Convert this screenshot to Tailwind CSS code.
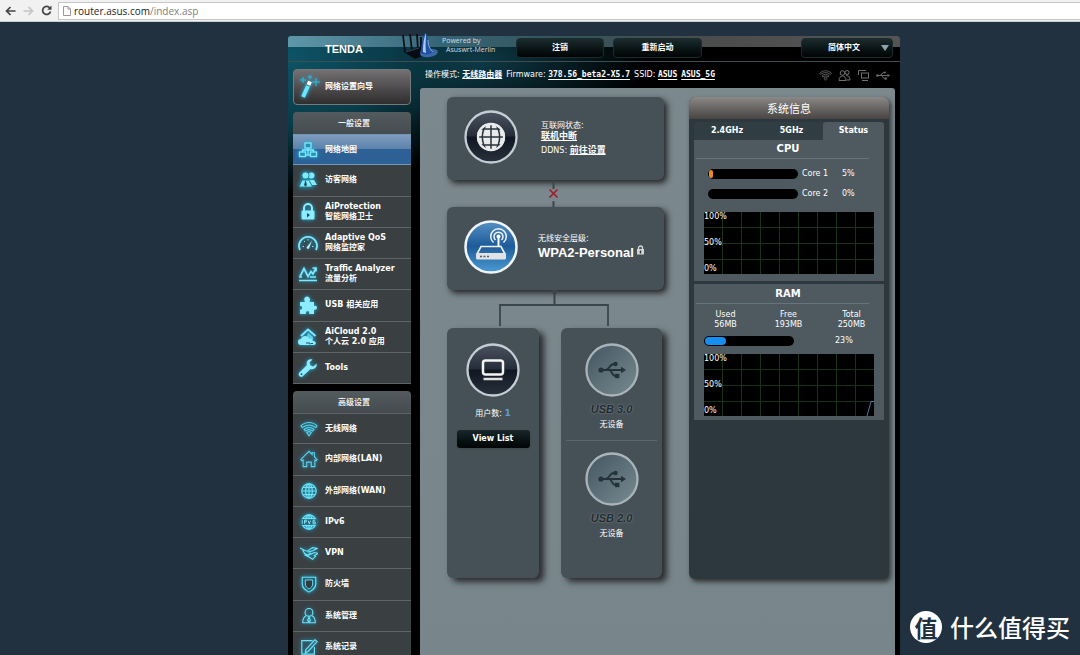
<!DOCTYPE html>
<html lang="zh-CN">
<head>
<meta charset="utf-8">
<title>ASUS Router - 网络地图</title>
<script src="https://cdn.jsdelivr.net/npm/@tailwindcss/browser@4"></script>
</head>
<body class="flex h-screen flex-col overflow-hidden bg-[#21313f] font-['DejaVu_Sans','Noto_Sans_CJK_SC',sans-serif] text-[8px] leading-[10px] text-white">

<!-- Icons -->
<svg class="hidden" aria-hidden="true">
  <symbol id="map" viewBox="0 0 20 20"><g fill="#2b8fb0" stroke="#7fe9ff" stroke-width="1.3"><rect x="7" y="3" width="6" height="5"/><rect x="1.5" y="12" width="6" height="4.500"/><rect x="12.500" y="12" width="6" height="4.500"/><path d="M10 8v6M4.500 12V10h11v2M8 15h4" fill="none"/></g></symbol>
  <symbol id="guests" viewBox="0 0 20 20"><g fill="#7fe9ff"><circle cx="13.500" cy="5.500" r="3"/><path d="M11 10h5l3 5h-5z"/><circle cx="7.500" cy="5.500" r="3.600" stroke="#1b6f86" stroke-width=".8"/><path d="M1 17l3-7h7l3.500 7z" stroke="#1b6f86" stroke-width=".8"/><path d="M7.500 10l-1.500 5 1.500 1.500L9 15z" fill="#17505f"/></g></symbol>
  <symbol id="lock" viewBox="0 0 20 20"><path d="M6 9V6a4 4 0 0 1 8 0v3" fill="none" stroke="#8decff" stroke-width="2"/><rect x="3.500" y="8.500" width="13" height="9" rx="1" fill="#8decff"/><path d="M9 11l3 2-3 2.500z" fill="#175060"/></symbol>
  <symbol id="gauge" viewBox="0 0 20 20"><g fill="none" stroke="#7fe9ff"><path d="M2 17a9 9 0 1 1 16 0" stroke-width="1.800"/><path d="M4.500 13.500h1.500M6 8l1 1M10 6v1.500M15.500 13.500H14" stroke-width="1"/></g><path d="M8.500 14.500l5.500-7-3 8a1.500 1.500 0 0 1-2.500-1z" fill="#a8f3ff"/></symbol>
  <symbol id="traffic" viewBox="0 0 20 20"><g fill="none" stroke="#7fe9ff" stroke-width="1.700"><path d="M2 12.500l4-8 4 8 3-5 2 2.500L18 4"/><path d="M14.500 4H18v3.500"/><path d="M1 16.500h18M1 13h3m8 0h6" stroke-width="1.300"/></g></symbol>
  <symbol id="usbapp" viewBox="0 0 20 20"><path d="M2 7h5c-2-4 .5-5.500 2-5.500S13 3 11.500 7H16v4c4-1.500 4 5 0 3.500V19h-5c1.500-4-4-4-3 0H2v-4.500c3 1 3-4.500 0-3.500z" fill="#8decff"/></symbol>
  <symbol id="cloud" viewBox="0 0 20 20"><path d="M3 9l7-6.500L17.500 9" fill="none" stroke="#7fe9ff" stroke-width="2"/><path d="M10 5.500l5 4.500v3H8z" fill="#5ccbe4"/><path d="M3 18a3 3 0 0 1 0-6c1-4 7-4 8-.5 3-.5 4 1 3.500 2.500 4-.5 4.500 4 1 4z" fill="#8decff"/><path d="M8 16h4v1.500M13 16.500h2" stroke="#175060" fill="none"/></symbol>
  <symbol id="wrench" viewBox="0 0 20 20"><path d="M18.500 5.500l-3 3-3-1-1-3 3-3c-4-1.500-7 2-5.500 5.500L1.500 14.500a2.300 2.300 0 0 0 3.500 3.500L12.500 11c4 1.300 7-2 6-5.500z" fill="#8decff"/><circle cx="3.500" cy="16.200" r=".9" fill="#175060"/></symbol>
  <symbol id="wifi" viewBox="0 0 20 20"><g fill="none" stroke="currentColor" stroke-width="1.200"><path d="M1 6.500c5-5 13-5 18 0l-1.500 2c-4.500-4-10.500-4-15 0z"/><path d="M4.500 10.500c3-3 8-3 11 0L14 12.300c-2.500-2-5.500-2-8 0z"/><path d="M7.500 14c1.500-1.300 3.500-1.300 5 0L10 17.500z"/></g></symbol>
  <symbol id="home" viewBox="0 0 20 20"><path d="M1 10.500l9-9 3.500 3.500V3H16v4.500l3 3-1 1.500-1.500-1v7.500h-4v-5h-5v5h-4V11L2 12z" fill="none" stroke="#5ed4ee" stroke-width="1.200"/></symbol>
  <symbol id="globe" viewBox="0 0 20 20"><g fill="none" stroke="#6fe2f8" stroke-width="1.300"><circle cx="10" cy="10" r="8"/><ellipse cx="10" cy="10" rx="3.700" ry="8"/><path d="M10 2v16M2 10h16M3.500 6h13M3.500 14h13"/></g></symbol>
  <symbol id="ipv6" viewBox="0 0 20 20"><use href="#globe"/><rect x="1" y="7" width="18" height="6" fill="#246476"/><path d="M2.500 8v4M5 12V8h2v2H5M9 8.500l1.300 3.500 1.300-3.500M17 8h-2.500v4H17v-2h-2.500" stroke="#8decff" fill="none"/></symbol>
  <symbol id="vpn" viewBox="0 0 20 20"><path d="M0 4.500l5 2.500 3 1 6-4 5 1-5 2.500-5 1.500M3 6.500l2 4 4 2 7-3 4 1-4 2.500 1 1-3 3-5-3-4-2M9 12.500l3-2.500" fill="none" stroke="#6fe2f8" stroke-width="1.300"/></symbol>
  <symbol id="shield" viewBox="0 0 20 20"><path d="M2.500 2.500h15V10c0 4.500-3.500 6.500-7.500 9-4-2.500-7.500-4.500-7.500-9z" fill="#246476" stroke="#6fe2f8" stroke-width="1.200"/><path d="M6 5.500h8V10c0 3-1.800 4-4 5.500C7.800 14 6 13 6 10z" fill="#303a40" stroke="#6fe2f8"/></symbol>
  <symbol id="admin" viewBox="0 0 20 20"><g fill="none" stroke="#6fe2f8" stroke-width="1.300"><circle cx="10" cy="6" r="4.300"/><path d="M7 9.500c-3 1.500-4 4.500-4 8h14c0-3.500-1-6.500-4-8M10 11l-1.500 4 1.500 1.500 1.500-1.500z"/></g></symbol>
  <symbol id="log" viewBox="0 0 20 20"><path d="M14 3H2v15h14v-8M19 4L9 15l-3 1.500.5-3.500L16.500 2z" fill="none" stroke="#6fe2f8" stroke-width="1.300"/></symbol>
  <symbol id="usb" viewBox="0 0 28 18"><g fill="none" stroke="currentColor" stroke-width="1.900"><path d="M3 9h21M7 9c5 0 4-6 9-6h1M11 9c3 0 3 6 6 6h2"/></g><g fill="currentColor"><circle cx="3" cy="9" r="2.600"/><circle cx="17.500" cy="3" r="2.200"/><rect x="17" y="12.800" width="4.400" height="4.400"/><path d="M23 5.800l5 3.200-5 3.200z"/></g></symbol>
</svg>

<!-- Browser toolbar -->
<nav aria-label="浏览器" class="flex h-[22px] shrink-0 items-center border-b border-[#c9ccd0] bg-[#f1f1f1] text-[#555]">
  <button aria-label="后退" class="ml-[5px] w-[14px]"><svg class="h-[10px] w-[11px]" viewBox="0 0 11 10"><path d="M10.500 5H2M5.500 1L1.500 5l4 4" fill="none" stroke="#444" stroke-width="1.700"/></svg></button>
  <button aria-label="前进" class="ml-1 w-[14px]"><svg class="h-[10px] w-[11px]" viewBox="0 0 11 10"><path d="M.5 5H9M5.500 1l4 4-4 4" fill="none" stroke="#c4c4c4" stroke-width="1.700"/></svg></button>
  <button aria-label="刷新" class="ml-[4px] w-[14px]"><svg class="h-[11px] w-[11px]" viewBox="0 0 11 11"><path d="M8.800 3A4 4 0 1 0 9.500 6.500" fill="none" stroke="#444" stroke-width="1.700"/><path d="M10.500.5v4.300H6.200z" fill="#444"/></svg></button>
  <div class="ml-[3px] flex h-[18px] flex-1 items-center border border-r-0 border-[#c6c6c6] bg-white pl-1">
    <svg class="h-[10px] w-[8px]" viewBox="0 0 8 10"><path d="M.5.500h4.500l2.500 2.500v6.500h-7zM5 .5V3h2.500" fill="none" stroke="#999"/></svg>
    <a href="#" class="ml-[3px] font-['Open_Sans',sans-serif] text-[10px] leading-4 text-[#808080]"><span class="text-[#222]">router.asus.com</span>/index.asp</a>
  </div>
</nav>

<div class="mt-[14px] mr-[180px] ml-[288px] flex min-h-0 flex-1 flex-col rounded-t-[3px] bg-black bg-[radial-gradient(ellipse_210px_140px_at_0_20px,#0d5467_0%,#0a3b48_50%,transparent_100%),radial-gradient(ellipse_170px_70px_at_190px_25px,#0d3a46_0%,transparent_100%)]">

  <!-- Top bar -->
  <header class="flex h-[26px] items-start rounded-t-[3px] border-b border-[#3d4d52] bg-[linear-gradient(90deg,#5f97aa_0%,#356575_25%,#34535c_45%,#4c4c4c_70%,#555_100%)] bg-[length:100%_11px] bg-no-repeat">
    <h1 class="ml-[37px] w-[76px] pt-[7px] font-['Liberation_Sans',sans-serif] text-[11px] leading-3 font-bold">TENDA</h1>
    <svg class="-mt-1 h-[28px] w-[38px] shrink-0" viewBox="0 0 38 28"><path d="M2 3l2 17M9 2l2 17M16 2l1 17M20 5v15" stroke="#0b1016" stroke-width="1.800"/><path d="M3 20l16-5 8 7-13 5z" fill="#080c12"/><path d="M5 20l13-4" stroke="#39566d" stroke-width=".8"/><ellipse cx="28" cy="21" rx="9" ry="4" fill="#3b69a8" transform="rotate(-8 28 21)"/><path d="M19 21C22 12 20 4 25 1c1 3 2 3 2 6 1 5 2 10 6 13-4 3-9 3-14 1z" fill="#2450a0"/><path d="M25 1c-2 5-3 10-3 19l3 1C24 14 25 8 25 1z" fill="#a7cdf3"/><path d="M27 8c0 5 2 10 5 12" stroke="#80acdf" fill="none"/></svg>
    <p class="ml-[3px] w-[74px] shrink-0 font-['Open_Sans',sans-serif] text-[7px] leading-[9px] text-[#d5dde0]">Powered by<br><span class="pl-1">Asuswrt-Merlin</span></p>
    <button class="mt-[2px] h-5 w-[88px] shrink-0 rounded-[4px] border border-[#1b2c2e] bg-linear-to-b from-[#1c2b2d] to-[#020505] font-bold">注销</button>
    <button class="mt-[2px] ml-[9px] h-5 w-[89px] shrink-0 rounded-[4px] border border-[#1b2c2e] bg-linear-to-b from-[#1c2b2d] to-[#020505] font-bold">重新启动</button>
    <div class="relative mt-[2px] mr-[7px] ml-auto">
      <select aria-label="语言" class="h-5 w-[92px] appearance-none rounded-[4px] border border-[#1b2c2e] bg-linear-to-b from-[#1c2b2d] to-[#020505] pl-[26px] font-bold"><option>简体中文</option></select>
      <svg class="pointer-events-none absolute top-[7px] right-1 h-[6px] w-[8px]" viewBox="0 0 8 6"><path d="M0 0h8L4 6z" fill="#8ba5ab"/></svg>
    </div>
  </header>

  <div class="flex min-h-0 flex-1 pr-[5px] pl-[5px]">

    <!-- Sidebar -->
    <aside class="w-[118px] shrink-0 pt-[7px] font-bold">
      <a href="#" class="flex h-[36px] items-center rounded-[4px] border border-[#74797b] bg-linear-to-b from-[#737172] to-[#302d2f] pl-[5px]">
        <svg class="mr-[4px] h-[24px] w-[22px] drop-shadow-[0_0_2px_#22c5f0]" viewBox="0 0 22 24"><path d="M4 22l5-11" stroke="#6fe6ff" stroke-width="4"/><path d="M9.500 10l1.500-3.500" stroke="#fff" stroke-width="4"/><path d="M4 2v6M1 5h6M17 3v8M13 7h8M11 0v4M9 2h4" stroke="#31b9df" stroke-width="1"/></svg>网络设置向导</a>

      <h2 class="mt-[7px] flex h-[22px] items-center justify-center rounded-t-[4px] bg-linear-to-b from-[#535b5e] to-[#454c4f] pt-[2px] pl-[4px] font-medium">一般设置</h2>
      <ul class="grid h-[250px] auto-rows-fr bg-[#3a3f42]">
        <li class="flex border-y border-[#7595b6] bg-[linear-gradient(#7e9cbd_0%,#5b82ac_48%,#2e6195_50%,#2c6197_100%)]"><a href="#" class="flex flex-1 items-center pl-[5px]"><svg class="mr-[7px] size-5 drop-shadow-[0_0_2px_#19b5e0]"><use href="#map"/></svg>网络地图</a></li>
        <li class="flex border-b border-[#5d6467]"><a href="#" class="flex flex-1 items-center pl-[5px]"><svg class="mr-[7px] size-5 drop-shadow-[0_0_2px_#19b5e0]"><use href="#guests"/></svg>访客网络</a></li>
        <li class="flex border-b border-[#5d6467]"><a href="#" class="flex flex-1 items-center pl-[5px]"><svg class="mr-[7px] size-5 drop-shadow-[0_0_2px_#19b5e0]"><use href="#lock"/></svg><span>AiProtection<br>智能网络卫士</span></a></li>
        <li class="flex border-b border-[#5d6467]"><a href="#" class="flex flex-1 items-center pl-[5px]"><svg class="mr-[7px] size-5 drop-shadow-[0_0_2px_#19b5e0]"><use href="#gauge"/></svg><span>Adaptive QoS<br>网络监控家</span></a></li>
        <li class="flex border-b border-[#5d6467]"><a href="#" class="flex flex-1 items-center pl-[5px]"><svg class="mr-[7px] size-5 shrink-0 drop-shadow-[0_0_2px_#19b5e0]"><use href="#traffic"/></svg><span class="whitespace-nowrap">Traffic Analyzer<br>流量分析</span></a></li>
        <li class="flex border-b border-[#5d6467]"><a href="#" class="flex flex-1 items-center pl-[5px]"><svg class="mr-[7px] size-5 drop-shadow-[0_0_2px_#19b5e0]"><use href="#usbapp"/></svg>USB 相关应用</a></li>
        <li class="flex border-b border-[#5d6467]"><a href="#" class="flex flex-1 items-center pl-[5px]"><svg class="mr-[7px] size-5 drop-shadow-[0_0_2px_#19b5e0]"><use href="#cloud"/></svg><span>AiCloud 2.0<br>个人云 2.0 应用</span></a></li>
        <li class="flex border-b border-[#5d6467]"><a href="#" class="flex flex-1 items-center pl-[5px]"><svg class="mr-[7px] size-5 drop-shadow-[0_0_2px_#19b5e0]"><use href="#wrench"/></svg>Tools</a></li>
      </ul>

      <h2 class="mt-[7px] flex h-[22px] items-center justify-center rounded-t-[4px] bg-linear-to-b from-[#535b5e] to-[#454c4f] pt-[2px] pl-[4px] font-medium">高级设置</h2>
      <ul class="grid h-[250px] auto-rows-fr bg-[#3a3f42]">
        <li class="flex border-y border-[#5d6467]"><a href="#" class="flex flex-1 items-center pl-[7px]"><svg class="mr-[7px] size-[18px] text-[#5ed4ee] drop-shadow-[0_0_2px_#19b5e0]"><use href="#wifi"/></svg>无线网络</a></li>
        <li class="flex border-b border-[#5d6467]"><a href="#" class="flex flex-1 items-center pl-[7px]"><svg class="mr-[7px] size-[18px] drop-shadow-[0_0_2px_#19b5e0]"><use href="#home"/></svg>内部网络(LAN)</a></li>
        <li class="flex border-b border-[#5d6467]"><a href="#" class="flex flex-1 items-center pl-[7px]"><svg class="mr-[7px] size-[18px] drop-shadow-[0_0_2px_#19b5e0]"><use href="#globe"/></svg>外部网络(WAN)</a></li>
        <li class="flex border-b border-[#5d6467]"><a href="#" class="flex flex-1 items-center pl-[7px]"><svg class="mr-[7px] size-[18px] drop-shadow-[0_0_2px_#19b5e0]"><use href="#ipv6"/></svg>IPv6</a></li>
        <li class="flex border-b border-[#5d6467]"><a href="#" class="flex flex-1 items-center pl-[7px]"><svg class="mr-[7px] size-[18px] drop-shadow-[0_0_2px_#19b5e0]"><use href="#vpn"/></svg>VPN</a></li>
        <li class="flex border-b border-[#5d6467]"><a href="#" class="flex flex-1 items-center pl-[7px]"><svg class="mr-[7px] size-[18px] drop-shadow-[0_0_2px_#19b5e0]"><use href="#shield"/></svg>防火墙</a></li>
        <li class="flex border-b border-[#5d6467]"><a href="#" class="flex flex-1 items-center pl-[7px]"><svg class="mr-[7px] size-[18px] drop-shadow-[0_0_2px_#19b5e0]"><use href="#admin"/></svg>系统管理</a></li>
        <li class="flex border-b border-[#5d6467]"><a href="#" class="flex flex-1 items-center pl-[7px]"><svg class="mr-[7px] size-[18px] drop-shadow-[0_0_2px_#19b5e0]"><use href="#log"/></svg>系统记录</a></li>
      </ul>
    </aside>

    <div class="ml-[9px] flex flex-1 flex-col">
      <!-- Status line -->
      <div class="flex h-[26px] items-center pr-[5px] pl-[5px] whitespace-nowrap">
        <p>操作模式: <a href="#" class="font-bold underline">无线路由器</a></p>
        <p class="ml-[4px]">Firmware: <a href="#" class="font-['DejaVu_Sans_Mono',monospace] font-bold underline underline-offset-2">378.56_beta2-X5.7</a></p>
        <p class="ml-[4px]">SSID: <a href="#" class="font-['DejaVu_Sans_Mono',monospace] font-bold underline underline-offset-2">ASUS</a></p>
        <a href="#" class="ml-[4px] font-['DejaVu_Sans_Mono',monospace] font-bold underline underline-offset-2">ASUS_5G</a>
        <div class="ml-auto flex items-center gap-[6px] text-[#707070]">
          <svg class="size-[13px]"><use href="#wifi"/></svg>
          <svg class="size-[13px]" viewBox="0 0 13 13" fill="none" stroke="currentColor"><circle cx="4.500" cy="4" r="2.300"/><circle cx="9" cy="3.500" r="2"/><path d="M1 11.500c0-6 7-6 7 0zM8 6.500c3 0 4 2 4 4.500H8.500"/></svg>
          <svg class="size-[13px]" viewBox="0 0 13 13" fill="none" stroke="currentColor"><path d="M1.500 6V1.500H9"/><rect x="4.500" y="4" width="7" height="5"/><path d="M5 11.500h6"/></svg>
          <svg class="h-[9px] w-[14px]"><use href="#usb"/></svg>
        </div>
      </div>

      <main class="flex flex-1 items-start gap-[25px] rounded-t-[3px] bg-linear-to-b from-[#7b888e] to-[#78868c] pt-[9px] pr-[6px] pl-[27px]">

        <!-- Network map -->
        <div class="flex-1">
          <section class="flex h-[83px] items-center rounded-[6px] bg-[#465157] pb-[3px] pl-[17px] shadow-[3px_3px_6px_#222]">
            <svg class="size-[54px] shrink-0" viewBox="0 0 54 54"><defs><linearGradient id="dark" x2="0" y2="1"><stop stop-color="#4a535f"/><stop offset=".48" stop-color="#252d39"/><stop offset=".5" stop-color="#101722"/><stop offset="1" stop-color="#28313c"/></linearGradient></defs><circle cx="27" cy="27" r="25.500" fill="url(#dark)" stroke="#c4cdd6" stroke-width="2.300"/><circle cx="27" cy="27" r="14" fill="#e8eaeb"/><path d="M27 13v28M13 27h28M16 19h22M16 35h22M23 13c-6 9-6 19 0 28M31 13c6 9 6 19 0 28" fill="none" stroke="#2a323c" stroke-width="1.500"/><circle cx="27" cy="27" r="13" fill="none" stroke="#e8eaeb" stroke-width="2.300"/></svg>
            <div class="ml-[23px] pt-[2px]">
              <p>互联网状态:<br><a href="#" class="text-[9px] font-bold underline">联机中断</a></p>
              <p class="mt-[3px]">DDNS: <a href="#" class="text-[9px] font-bold underline">前往设置</a></p>
            </div>
          </section>
          <svg class="ml-[98px] block h-[27px] w-[16px]" viewBox="0 0 16 27"><path d="M8.500 0v9M8.500 21v6" stroke="#3a464c" stroke-width="2"/><path d="M4.500 9.500l8 8M12.500 9.500l-8 8" stroke="#9c1f2c" stroke-width="1.700"/></svg>

          <section class="flex h-[83px] items-center rounded-[6px] bg-[#465157] pb-[4px] pl-[17px] shadow-[3px_3px_6px_#222]">
            <svg class="size-[54px] shrink-0" viewBox="0 0 54 54"><defs><linearGradient id="blue" x2="0" y2="1"><stop stop-color="#548fc4"/><stop offset=".48" stop-color="#1e5b98"/><stop offset="1" stop-color="#4b9bd4"/></linearGradient></defs><circle cx="27" cy="27" r="25.500" fill="url(#blue)" stroke="#f0f5fa" stroke-width="2.500"/><path d="M17 26.500h20l4 7.500H13z" fill="none" stroke="#eef2f5" stroke-width="1.600"/><rect x="12" y="33" width="30" height="6.500" rx="1.500" fill="#dfe3e6"/><path d="M16 36.500h2m1.500 0h2m1.500 0h2" stroke="#51606c" stroke-width="1.500"/><path d="M34.500 27V17" stroke="#fff" stroke-width="2"/><circle cx="34.500" cy="16.500" r="2" fill="#fff"/><path d="M31.500 20a4.500 4.500 0 1 1 6 0M29.500 22.500a7.800 7.800 0 1 1 10 0" fill="none" stroke="#eef5fb" stroke-width="1.500"/></svg>
            <div class="ml-[20px]">
              <p class="pt-[2px]">无线安全层级:</p>
              <p class="flex items-center gap-[2px] font-['Liberation_Sans',sans-serif] text-[13px] leading-[18px] font-bold">WPA2-Personal
                <svg class="mb-[6px] h-[10px] w-[9px]" viewBox="0 0 9 10"><path d="M2.500 5V3a2 2 0 0 1 4 0v2" fill="none" stroke="#ddd" stroke-width="1.300"/><rect x="1" y="4" width="7" height="5.500" fill="#d5d5d5"/><path d="M4.500 5.500v3" stroke="#333" stroke-width="1.500"/></svg></p>
            </div>
          </section>
          <svg class="ml-[52px] block h-[38px] w-[110px]" viewBox="0 0 110 38"><path d="M52 0h7l-2.500 5v9h-2V5z" fill="#3a464c"/><path d="M1 36V15h108v21" fill="none" stroke="#3a464c" stroke-width="1.800"/></svg>

          <div class="flex gap-[22px] pr-[2px] text-center">
            <section class="h-[250px] w-[92px] rounded-[6px] bg-[#465157] pt-[15px] shadow-[5px_4px_6px_#2c2c2e]">
              <svg class="mx-auto size-[54px]" viewBox="0 0 54 54"><circle cx="27" cy="27" r="25.500" fill="url(#dark)" stroke="#c4cdd6" stroke-width="2.300"/><rect x="17" y="17.500" width="20" height="14" rx="2.500" fill="none" stroke="#f4f4f4" stroke-width="2.500"/><path d="M17.500 36h19" stroke="#dedede" stroke-width="2.500"/></svg>
              <p class="mt-[11px]">用户数: <b class="text-[9px] text-[#5f9bd0]">1</b></p>
              <button class="mt-[11px] h-[18px] w-[73px] rounded-[3px] bg-linear-to-b from-[#18272a] to-[#020505] font-bold shadow">View List</button>
            </section>
            <section class="h-[250px] flex-1 rounded-[6px] bg-[#465157] px-[5px] pt-[15px] shadow-[5px_4px_6px_#2c2c2e]">
              <svg class="mx-auto size-[54px] text-[#263239]" viewBox="0 0 54 54"><defs><linearGradient id="grey" x2="1" y2="1"><stop stop-color="#435660"/><stop offset="1" stop-color="#788b92"/></linearGradient></defs><circle cx="27" cy="27" r="25.500" fill="url(#grey)" stroke="#a9b4b9" stroke-width="2.300"/><use href="#usb" x="13" y="18" width="28" height="18"/></svg>
              <p class="mt-[5px] font-['Liberation_Sans_Narrow','Liberation_Sans',sans-serif] text-[11px] leading-[14px] font-bold text-[#20292e] italic [text-shadow:0_0_2px_#929da2]">USB 3.0</p>
              <p class="mt-[4px]">无设备</p>
              <hr class="mt-[10px] border-[#5b666b]">
              <svg class="mx-auto mt-[11px] size-[54px] text-[#263239]" viewBox="0 0 54 54"><circle cx="27" cy="27" r="25.500" fill="url(#grey)" stroke="#a9b4b9" stroke-width="2.300"/><use href="#usb" x="13" y="18" width="28" height="18"/></svg>
              <p class="mt-[5px] font-['Liberation_Sans_Narrow','Liberation_Sans',sans-serif] text-[11px] leading-[14px] font-bold text-[#20292e] italic [text-shadow:0_0_2px_#929da2]">USB 2.0</p>
              <p class="mt-[4px]">无设备</p>
            </section>
          </div>
        </div>

        <!-- System information -->
        <section class="h-[482px] w-[200px] shrink-0 rounded-[6px] bg-[#2c383d] shadow-[2px_3px_5px_#333]">
          <h2 class="flex h-[22px] items-center justify-center rounded-t-[6px] bg-linear-to-b from-[#8b8987] to-[#484543] pt-[4px] text-[11px]">系统信息</h2>
          <div class="mx-[5px] mt-[3px] flex h-[18px] rounded-t-[3px] bg-[#303e44]" role="tablist">
            <button role="tab" class="w-[66px] font-bold">2.4GHz</button>
            <button role="tab" class="flex-1 font-bold">5GHz</button>
            <button role="tab" aria-selected="true" class="w-[61px] rounded-t-[3px] bg-[#4e5a5f] font-bold">Status</button>
          </div>
          <div class="mx-[5px] h-[141px] bg-[#4e5a5f] px-[10px]">
            <h3 class="-ml-[8px] mr-[5px] h-[19px] border-b border-[#64757c] pt-[3px] pl-[11px] text-center text-[10px] leading-3 font-bold">CPU</h3>
            <div class="flex h-[20px] items-center pt-[10px] pl-[4px]"><div class="h-[10px] w-[90px] shrink-0 rounded-full bg-black p-px"><div class="h-[8px] rounded-[3px] bg-[#f08a1c]" style="width:5%"></div></div><span class="ml-[4px] w-[40px]">Core 1</span><span>5%</span></div>
            <div class="flex h-[20px] items-center pt-[10px] pl-[4px]"><div class="h-[10px] w-[90px] shrink-0 rounded-full bg-black"></div><span class="ml-[4px] w-[40px]">Core 2</span><span>0%</span></div>
            <div class="mt-[13px] flex h-[62px] w-full flex-col justify-between bg-black bg-[linear-gradient(90deg,transparent_18px,#193319_18px),linear-gradient(transparent_15px,#193319_15px)] bg-[length:19px_100%,100%_16px]"><span>100%</span><span>50%</span><span>0%</span></div>
          </div>
          <div class="mx-[5px] mt-[3px] h-[136px] bg-[#4e5a5f] px-[10px]">
            <h3 class="-ml-[8px] mr-[5px] h-[20px] border-b border-[#64757c] pt-[4px] pl-[11px] text-center text-[10px] leading-3 font-bold">RAM</h3>
            <div class="-ml-[10px] -mr-[9px] grid grid-cols-3 pt-[6px] text-center"><p>Used<br>56MB</p><p>Free<br>193MB</p><p>Total<br>250MB</p></div>
            <div class="flex h-[16px] items-center pt-[5px]"><div class="h-[10px] w-[90px] shrink-0 rounded-full bg-black p-px"><div class="h-[8px] rounded-full bg-[#168ef0]" style="width:24%"></div></div><span class="ml-[41px]">23%</span></div>
            <div class="relative mt-[8px] flex h-[62px] w-full flex-col justify-between bg-black bg-[linear-gradient(90deg,transparent_18px,#193319_18px),linear-gradient(transparent_15px,#193319_15px)] bg-[length:19px_100%,100%_16px]"><span>100%</span><span>50%</span><span>0%</span>
              <svg class="absolute right-0 bottom-0 h-[16px] w-[8px]" viewBox="0 0 8 16"><path d="M1 16L5 1.500h3" fill="none" stroke="#4d7aa5"/></svg>
            </div>
          </div>
        </section>
      </main>
    </div>
  </div>
</div>

<!-- Site watermark -->
<div class="absolute right-[10px] bottom-[12px] flex items-center gap-[8px] font-['Noto_Sans_CJK_SC',sans-serif]">
  <span class="flex size-[32px] items-center justify-center rounded-full bg-white text-[23px] leading-8 font-bold text-[#21313f]">值</span>
  <span class="text-[24px] leading-8 font-medium">什么值得买</span>
</div>
</body>
</html>
